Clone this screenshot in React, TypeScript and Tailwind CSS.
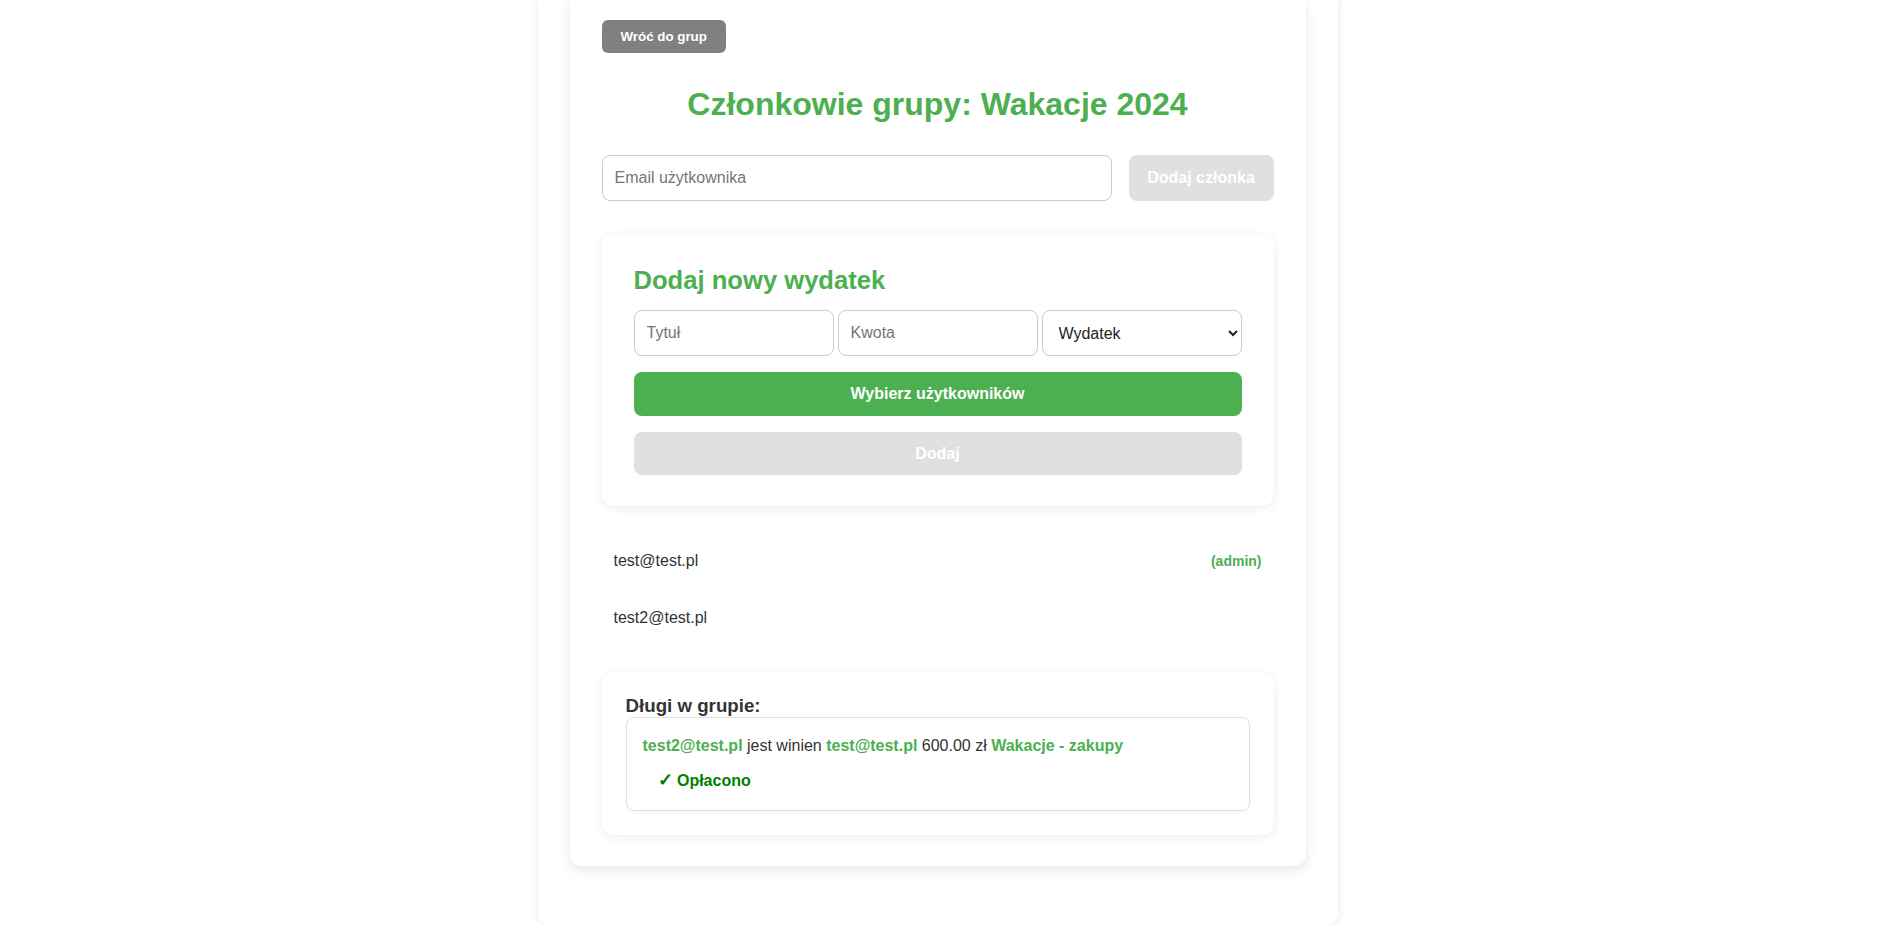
export default function App() {
  return (
    <div className="min-h-screen bg-white flex justify-center pr-[9px] font-['Liberation_Sans',Arial,sans-serif]">
      <div className="w-[800px] bg-white px-8 pb-[58px] rounded-b-xl shadow-[0_0_10px_rgba(0,0,0,0.1)]">
        <div className="bg-white rounded-b-xl px-8 pt-5 pb-[31px] shadow-[0_4px_12px_rgba(0,0,0,0.1)]">
          <div className="flex">
            <button className="h-[33px] px-[19px] rounded-md bg-[#808080] text-white font-bold text-[13.33px]">
              Wróć do grup
            </button>
          </div>

          <h1 className="mt-[33px] text-center text-[32px] leading-[37px] font-bold text-[#4CAF50]">
            Członkowie grupy: Wakacje 2024
          </h1>

          <div className="mt-8 flex gap-[17px]">
            <input
              placeholder="Email użytkownika"
              className="flex-1 h-[46px] px-3 border border-[#ccc] rounded-lg text-base text-[#222] placeholder:text-[#757575] outline-none"
            />
            <button className="w-[145px] h-[46px] rounded-lg bg-[#e0e0e0] text-white font-bold text-base">
              Dodaj członka
            </button>
          </div>

          <div className="mt-[33px] bg-white rounded-xl px-8 pt-8 pb-[31px] shadow-[0_2px_10px_rgba(0,0,0,0.08)]">
            <h2 className="text-[25.6px] leading-[29px] font-bold text-[#4CAF50] mb-[15px]">
              Dodaj nowy wydatek
            </h2>
            <div className="grid grid-cols-3 gap-1">
              <input
                placeholder="Tytuł"
                className="h-[46px] px-3 border border-[#ccc] rounded-lg text-base placeholder:text-[#757575] outline-none"
              />
              <input
                placeholder="Kwota"
                className="h-[46px] px-3 border border-[#ccc] rounded-lg text-base placeholder:text-[#757575] outline-none"
              />
              <select className="h-[46px] px-3 border border-[#ccc] rounded-lg text-base bg-white text-[#222]">
                <option>Wydatek</option>
                <option>Przychód</option>
              </select>
            </div>
            <button className="mt-4 w-full h-[44px] rounded-lg bg-[#4CAF50] text-white font-bold text-base">
              Wybierz użytkowników
            </button>
            <button className="mt-4 w-full h-[43px] rounded-lg bg-[#e0e0e0] text-white font-bold text-base">
              Dodaj
            </button>
          </div>

          <ul className="mt-[27px] text-base text-[#333]">
            <li className="flex justify-between items-center px-3 pt-[19px] pb-5 leading-[18px]">
              <span>test@test.pl</span>
              <span className="text-[14px] font-bold text-[#4CAF50]">(admin)</span>
            </li>
            <li className="flex justify-between items-center px-3 pt-[19px] pb-[18px] leading-[18px]">
              <span>test2@test.pl</span>
            </li>
          </ul>

          <div className="mt-[27px] bg-white rounded-xl px-6 pt-[23px] pb-6 shadow-[0_2px_10px_rgba(0,0,0,0.08)]">
            <h3 className="text-[18.72px] leading-[22px] font-bold text-[#333]">Długi w grupie:</h3>
            <div className="border border-[#e0e0e0] rounded-lg px-4 pt-[19px] pb-5 shadow-[0_1px_3px_rgba(0,0,0,0.06)] text-base leading-[18px] text-[#333]">
              <div>
                <span className="font-bold text-[#4CAF50]">test2@test.pl</span> jest winien{" "}
                <span className="font-bold text-[#4CAF50]">test@test.pl</span> 600.00 zł{" "}
                <span className="font-bold text-[#4CAF50]">Wakacje - zakupy</span>
              </div>
              <div className="mt-4 ml-[15px] font-bold text-[#008000]">
                <span className="text-[18px] leading-[18px]">✓</span> Opłacono
              </div>
            </div>
          </div>
        </div>
      </div>
    </div>
  );
}
